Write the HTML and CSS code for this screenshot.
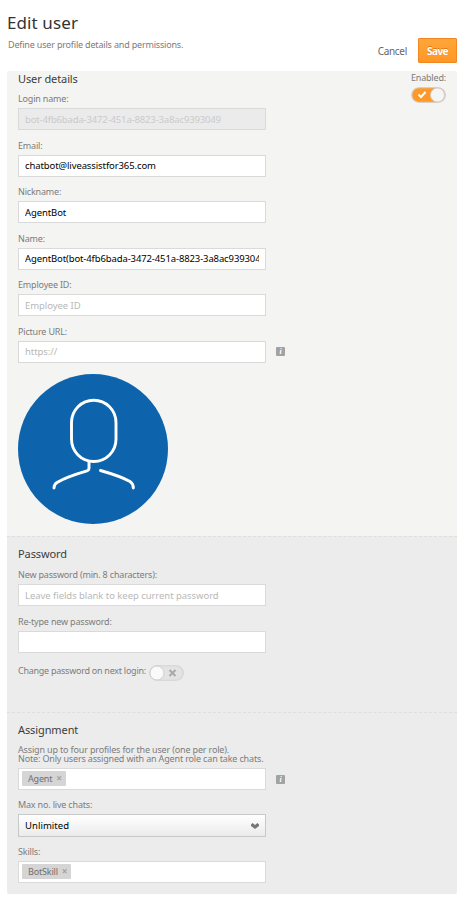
FILE: index.html
```html
<!DOCTYPE html>
<html lang="en">
<head>
    <meta charset="UTF-8">
    <meta name="viewport" content="width=device-width, initial-scale=1.0">
    <title>Edit user</title>
    <link rel="stylesheet" href="styles.css">
</head>
<body>
    <header class="page-header">
        <div class="page-title">
            <h1>Edit user</h1>
            <p>Define user profile details and permissions.</p>
        </div>
        <div class="actions">
            <a class="cancel">Cancel</a>
            <button type="button" class="save">Save</button>
        </div>
    </header>

    <form class="panel">
        <section class="details">
            <div class="fields">
                <h2>User details</h2>
                <div class="field">
                    <label for="login">Login name:</label>
                    <input type="text" id="login" value="bot-4fb6bada-3472-451a-8823-3a8ac9393049" disabled>
                </div>
                <div class="field">
                    <label for="email">Email:</label>
                    <input type="text" id="email" value="chatbot@liveassistfor365.com">
                </div>
                <div class="field">
                    <label for="nickname">Nickname:</label>
                    <input type="text" id="nickname" value="AgentBot">
                </div>
                <div class="field">
                    <label for="name">Name:</label>
                    <input type="text" id="name" class="long-value" value="AgentBot(bot-4fb6bada-3472-451a-8823-3a8ac939304">
                </div>
                <div class="field">
                    <label for="employee">Employee ID:</label>
                    <input type="text" id="employee" placeholder="Employee ID">
                </div>
                <div class="field">
                    <label for="picture">Picture URL:</label>
                    <div class="with-info">
                        <input type="text" id="picture" placeholder="https://">
                        <span class="info">i</span>
                    </div>
                </div>
                <svg class="avatar" viewBox="0 0 150 150" width="150" height="150">
                    <circle cx="75" cy="75" r="75" fill="#0d64ac"/>
                    <g fill="none" stroke="#fff" stroke-width="2.9" stroke-linecap="round" stroke-linejoin="round">
                        <rect x="53.5" y="26.3" width="44.5" height="61.2" rx="22.2"/>
                        <path d="M71 87.5V94Q71 96.2 69 96.8C58 100 47 103.5 39 108.5Q36 110.5 36 114"/>
                        <path d="M82.5 96.5C93 99.5 104 103 112 107.5Q115.3 109.5 115.3 114"/>
                    </g>
                </svg>
            </div>
            <div class="enabled">
                <span>Enabled:</span>
                <svg class="toggle" viewBox="0 0 35 16" width="35" height="16">
                    <rect x=".75" y=".75" width="33.5" height="14.5" rx="7.25" fill="#ff9827" stroke="#d0ccc5" stroke-width="1.2"/>
                    <path d="M7.5 7.5l2.5 2.5 4.5-5" fill="none" stroke="#fff" stroke-width="2"/>
                    <circle cx="26.5" cy="8" r="7" fill="#f5f5f5" stroke="#cfcfcf"/>
                </svg>
            </div>
        </section>

        <section class="password">
            <h2>Password</h2>
            <div class="field">
                <label for="new-password">New password (min. 8 characters):</label>
                <input type="password" id="new-password" placeholder="Leave fields blank to keep current password">
            </div>
            <div class="field">
                <label for="retype">Re-type new password:</label>
                <input type="password" id="retype">
            </div>
            <div class="toggle-row">
                <span>Change password on next login:</span>
                <svg class="toggle" viewBox="0 0 35 16" width="35" height="16">
                    <rect x=".75" y=".75" width="33.5" height="14.5" rx="7.25" fill="#e3e3e3" stroke="#d4d4d4" stroke-width="1.2"/>
                    <circle cx="8" cy="8" r="7" fill="#fafafa" stroke="#cfcfcf"/>
                    <path d="M20.5 5l6 6m0-6l-6 6" stroke="#a9a9a9" stroke-width="2"/>
                </svg>
            </div>
        </section>

        <section class="assignment">
            <h2>Assignment</h2>
            <p class="note">Assign up to four profiles for the user (one per role).<br>Note: Only users assigned with an Agent role can take chats.</p>
            <div class="with-info profiles">
                <div class="tags"><span class="tag">Agent<i>×</i></span></div>
                <span class="info">i</span>
            </div>
            <div class="field">
                <label>Max no. live chats:</label>
                <div class="select">
                    <span>Unlimited</span>
                    <svg viewBox="0 0 8 6" width="8" height="6"><path d="M0 1.5L1.5 0 4 2 6.5 0 8 1.5V3L4 6 0 3z" fill="#777"/></svg>
                </div>
            </div>
            <div class="field">
                <label>Skills:</label>
                <div class="tags"><span class="tag">BotSkill<i>×</i></span></div>
            </div>
        </section>
    </form>
</body>
</html>
```
FILE: styles.css
```css
* {
    box-sizing: border-box;
}

body {
    margin: 0;
    padding: 0 14px 0 7px;
    background: #fff;
    color: #7c7c7c;
    font-family: "Noto Sans", sans-serif;
    font-size: 9px;
    letter-spacing: -0.18px;
}

h1, h2, p {
    margin: 0;
    font-weight: normal;
}

.page-header {
    display: flex;
    justify-content: space-between;
    height: 71px;
}

.page-title {
    padding-top: 12px;
}

.page-title h1 {
    color: #333;
    font-size: 17px;
    line-height: 22px;
    letter-spacing: 0.1px;
}

.page-title p {
    padding: 4px 0 0 1px;
    line-height: 14px;
}

.actions {
    display: flex;
    align-items: center;
    gap: 11px;
    height: 25px;
    margin-top: 38px;
}

.cancel {
    color: #666;
    font-size: 10px;
    letter-spacing: -0.3px;
}

.save {
    width: 39px;
    height: 25px;
    padding: 0;
    border: 1px solid #f08a20;
    border-radius: 1px;
    background: linear-gradient(#ffa63a, #ff9626);
    color: #fff;
    font: bold 10px "Noto Sans", sans-serif;
    letter-spacing: -0.6px;
    text-shadow: 0 -1px 0 #d97a18;
}

.panel {
    border-radius: 2px;
    overflow: hidden;
}

section {
    padding: 0 11px;
}

h2 {
    color: #3c3c3c;
    font-size: 11px;
    line-height: 16px;
    letter-spacing: -0.1px;
}

.details {
    display: flex;
    justify-content: space-between;
    height: 465px;
    background: #f4f4f2;
}

.details h2 {
    margin-bottom: 5px;
}

.field {
    height: 46.5px;
}

label {
    display: block;
    height: 16px;
    line-height: 14px;
}

input, .tags, .select {
    display: block;
    width: 248px;
    height: 22px;
    border: 1px solid #dadada;
    background: #fff;
}

input {
    padding: 0 6px;
    color: #000;
    font: 9.5px "Noto Sans", sans-serif;
    letter-spacing: -0.1px;
}

input:disabled {
    background: #ebebeb;
    color: #cacaca;
    letter-spacing: -0.15px;
}

input::placeholder {
    color: #b8b8b8;
    opacity: 1;
    letter-spacing: -0.05px;
}

.long-value {
    letter-spacing: -0.12px;
}

.with-info {
    display: flex;
    align-items: center;
    gap: 10px;
}

.info {
    width: 9px;
    height: 9px;
    border-radius: 1px;
    background: #a2a2a2;
    color: #fff;
    font: italic bold 8px/9px "Liberation Serif", serif;
    text-align: center;
}

.avatar {
    display: block;
    margin-top: 3px;
}

.enabled {
    display: flex;
    flex-direction: column;
    align-items: flex-end;
    line-height: 13px;
}

.enabled .toggle {
    margin-top: 3px;
}

.password, .assignment {
    background: #ececec;
    border-top: 1px dashed #dedede;
}

.password {
    height: 176px;
    padding-top: 9px;
}

.password h2 {
    margin-bottom: 6px;
}

.toggle-row {
    display: flex;
    gap: 3px;
    line-height: 12px;
    letter-spacing: -0.26px;
    margin-top: 4px;
}

.assignment {
    height: 182px;
    padding-top: 9px;
}

.assignment h2 {
    margin-bottom: 7px;
}

.note {
    line-height: 9px;
    letter-spacing: -0.16px;
}

.profiles {
    margin: 5px 0 8px;
}

.tags {
    padding: 2px 3px;
}

.tag {
    display: inline-flex;
    align-items: center;
    height: 15px;
    padding: 0 4px 0 6px;
    border-radius: 1px;
    background: #d5d5d5;
    color: #707070;
    line-height: 15px;
    vertical-align: top;
}

.tag i {
    margin-left: 4px;
    color: #a3a3a3;
    font: bold 10px/15px "Noto Sans", sans-serif;
}

.select {
    display: flex;
    align-items: center;
    justify-content: space-between;
    height: 23px;
    padding: 0 6px;
    border-color: #c8c8c8;
    background: linear-gradient(#fff, #ebebeb);
    color: #000;
    font-size: 9.5px;
    letter-spacing: 0.05px;
}
```
